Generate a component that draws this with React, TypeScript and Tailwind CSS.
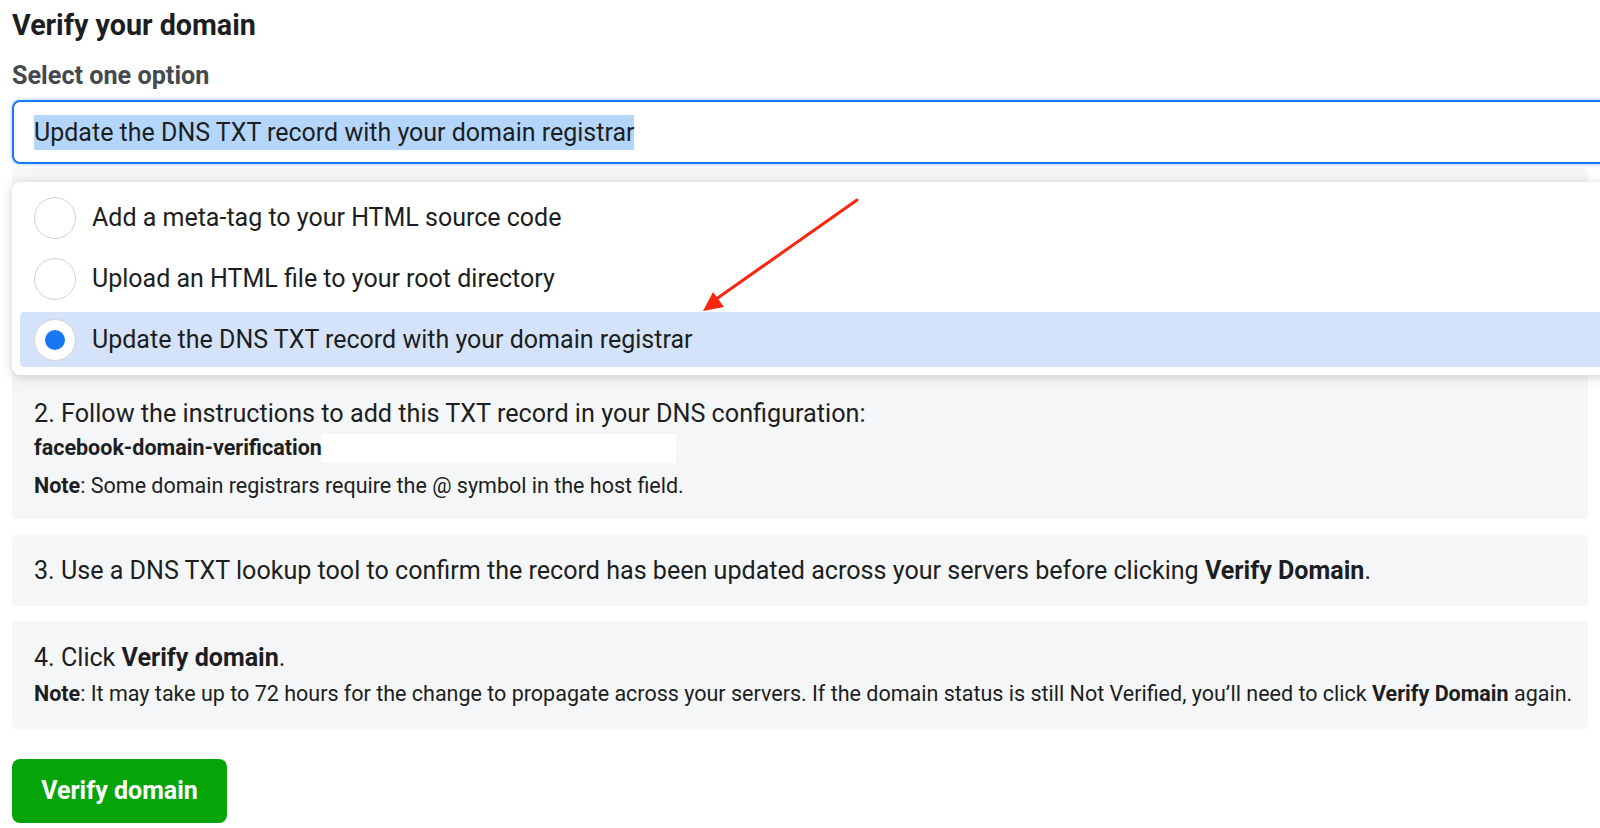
import React from 'react';

const options = [
  'Add a meta-tag to your HTML source code',
  'Upload an HTML file to your root directory',
  'Update the DNS TXT record with your domain registrar',
];

function Radio({ checked }: { checked: boolean }) {
  return (
    <span className="flex h-[42px] w-[42px] shrink-0 items-center justify-center rounded-full border-[1.5px] border-[#cfd2d6] bg-white">
      {checked && <span className="h-[20px] w-[20px] rounded-full bg-[#1877f2]" />}
    </span>
  );
}

export default function App() {
  const selected = 2;

  return (
    <div className="relative h-[828px] w-full overflow-hidden bg-white font-['Roboto','Liberation_Sans',sans-serif] text-[#1c1e21]">
      <div className="px-3">
        <h1 className="pt-[9px] text-[28.7px] font-bold leading-[32px]">Verify your domain</h1>
        <h2 className="mt-[21px] text-[25.2px] font-bold leading-[28px] text-[#444950]">Select one option</h2>

        {/* Select field (focused) */}
        <div className="-mr-8 mt-[10px] flex h-[64px] items-center rounded-lg border-2 border-[#1877f2] pl-[20px] shadow-[0_0_0_2px_rgba(24,119,242,0.15)]">
          <span className="bg-[#b4d6fd] text-[25px] leading-[35px]">{options[selected]}</span>
        </div>

        {/* Step 2 */}
        <div className="mt-[4px] rounded-sm bg-[#f5f6f7] px-[22px] pb-[17px] pt-[230px]">
          <p className="text-[25.2px] leading-[32px]">
            2. Follow the instructions to add this TXT record in your DNS configuration:
          </p>
          <div className="mt-[4px] flex h-[29px] items-center">
            <span className="text-[21.5px] font-bold">facebook-domain-verification</span>
            <span className="h-[29px] w-[354px] bg-white" />
          </div>
          <p className="mt-[7px] text-[21.5px] leading-[32px]">
            <b>Note</b>: Some domain registrars require the @ symbol in the host field.
          </p>
        </div>

        {/* Step 3 */}
        <div className="mt-[16px] flex h-[71px] items-center rounded-sm bg-[#f5f6f7] px-[22px]">
          <p className="text-[25.1px] leading-[32px]">
            3. Use a DNS TXT lookup tool to confirm the record has been updated across your servers before clicking{' '}
            <b>Verify Domain</b>.
          </p>
        </div>

        {/* Step 4 */}
        <div className="mt-[15px] h-[108px] rounded-sm bg-[#f5f6f7] px-[22px] pt-[21px]">
          <p className="text-[25.1px] leading-[32px]">
            4. Click <b>Verify domain</b>.
          </p>
          <p className="mt-[4px] whitespace-nowrap text-[21.5px] leading-[32px]">
            <b>Note</b>: It may take up to 72 hours for the change to propagate across your servers. If the domain
            status is still Not Verified, you’ll need to click <b>Verify Domain</b> again.
          </p>
        </div>

        <button className="mt-[30px] h-[64px] w-[215px] rounded-lg bg-[#05a50a] text-[25px] font-bold text-white">
          Verify domain
        </button>
      </div>

      {/* Open dropdown menu */}
      <div className="absolute left-3 right-[-20px] top-[182px] flex flex-col gap-[6px] rounded-lg bg-white p-2 shadow-[0_2px_12px_rgba(0,0,0,0.18)]">
        {options.map((o, i) => (
          <div
            key={o}
            className={`flex h-[55px] items-center gap-4 rounded px-[14px] text-[25px] ${i === selected ? 'bg-[#d4e3f9]' : ''}`}
          >
            <Radio checked={i === selected} />
            <span>{o}</span>
          </div>
        ))}
      </div>

      {/* Annotation arrow */}
      <svg className="pointer-events-none absolute left-0 top-0" width="1600" height="828">
        <line x1="857" y1="200" x2="712" y2="302" stroke="#f9260f" strokeWidth="3" strokeLinecap="round" />
        <polygon points="703,311 713,292 724,307" fill="#f9260f" />
      </svg>
    </div>
  );
}
